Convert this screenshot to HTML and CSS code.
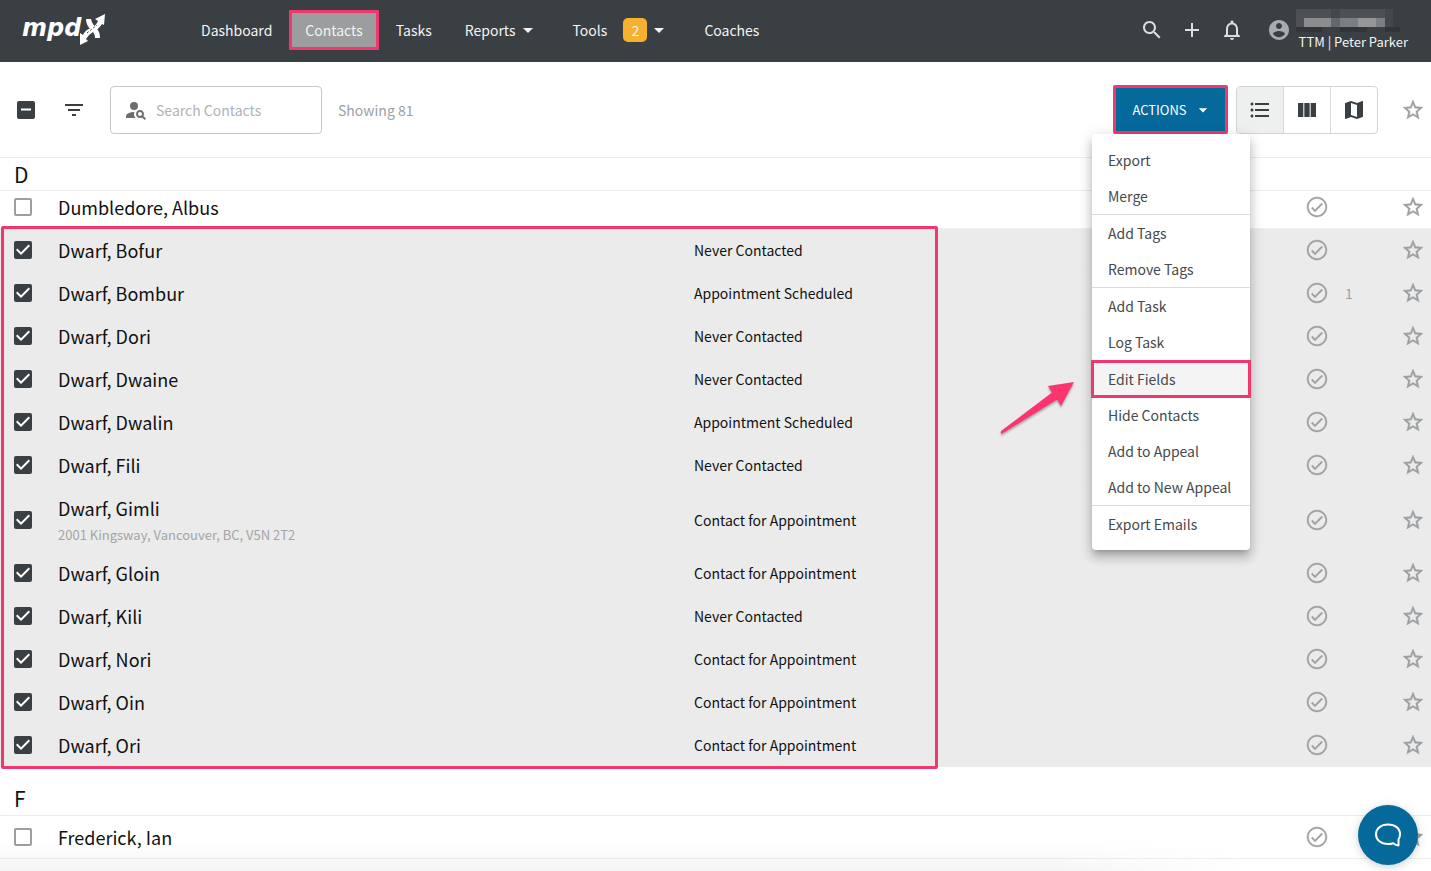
FILE: index.html
```html
<!DOCTYPE html>
<html lang="en">
<head>
<meta charset="utf-8">
<title>Contacts | MPDX</title>
<meta name="viewport" content="width=device-width, initial-scale=1">
<link rel="stylesheet" href="styles.css">
</head>
<body>
<svg width="0" height="0" class="sprite" aria-hidden="true">
  <symbol id="i-star" viewBox="0 0 24 24"><path d="M22 9.24l-7.19-.62L12 2 9.19 8.63 2 9.24l5.46 4.73L5.82 21 12 17.27 18.18 21l-1.63-7.03L22 9.24zM12 15.4l-3.76 2.27 1-4.28-3.32-2.88 4.38-.38L12 6.1l1.71 4.04 4.38.38-3.32 2.88 1 4.28L12 15.4z"/></symbol>
  <symbol id="i-done" viewBox="0 0 24 24"><path d="M12 2C6.48 2 2 6.48 2 12s4.48 10 10 10 10-4.48 10-10S17.52 2 12 2zm0 18.500c-4.690 0-8.500-3.810-8.500-8.500S7.310 3.500 12 3.500s8.500 3.810 8.500 8.500-3.810 8.500-8.500 8.500zm4.590-12.420L10 14.670l-2.590-2.580L6.300 13.200 10 16.900l7.700-7.700z"/></symbol>
  <symbol id="i-down" viewBox="0 0 24 24"><path d="M7 10l5 5 5-5z"/></symbol>
</svg>

<header class="topbar">
  <a class="logo" href="#" aria-label="mpdx">
    <svg width="90" height="40" viewBox="0 0 90 40" aria-hidden="true">
      <text class="logo-text" x="0" y="26">mpd</text>
      <path d="M83 4L82 15L80 14Q77 19 71 22Q66 25 64 29L66 31L58 35L58 23L61 25Q63 20 69 18Q74 16 76 11L73 9Z"/>
      <path d="M64 9L69 9Q70 14 75 19Q78 22 78 28L73 28Q73 23 69 20Q64 15 64 9Z"/>
      <path class="logo-gap" d="M65 23L75 15"/>
    </svg>
  </a>
  <nav class="nav">
    <a href="#">Dashboard</a>
    <a href="#" class="current" aria-current="page">Contacts</a>
    <a href="#">Tasks</a>
    <a href="#">Reports<svg class="icon"><use href="#i-down"/></svg></a>
    <a href="#">Tools<span class="badge">2</span><svg class="icon"><use href="#i-down"/></svg></a>
    <a href="#">Coaches</a>
  </nav>
  <div class="tools">
    <button type="button" aria-label="Search"><svg class="icon" viewBox="0 0 24 24"><path d="M15.5 14h-.79l-.28-.27C15.410 12.590 16 11.110 16 9.500 16 5.910 13.090 3 9.500 3S3 5.910 3 9.500 5.910 16 9.500 16c1.610 0 3.090-.59 4.230-1.570l.27.28v.79l5 4.990L20.490 19l-4.990-5zm-6 0C7.010 14 5 11.990 5 9.500S7.010 5 9.500 5 14 7.010 14 9.500 11.990 14 9.500 14z"/></svg></button>
    <button type="button" aria-label="Add"><svg class="icon" viewBox="0 0 24 24"><path d="M19 13h-6v6h-2v-6H5v-2h6V5h2v6h6v2z"/></svg></button>
    <button type="button" aria-label="Notifications"><svg class="icon" viewBox="0 0 24 24"><path d="M12 22c1.100 0 2-.9 2-2h-4c0 1.100.9 2 2 2zm6-6v-5c0-3.070-1.630-5.640-4.500-6.320V4c0-.83-.67-1.500-1.500-1.500s-1.500.67-1.500 1.500v.68C7.640 5.360 6 7.920 6 11v5l-2 2v1h16v-1l-2-2zm-2 1H8v-6c0-2.480 1.510-4.500 4-4.500s4 2.020 4 4.500v6z"/></svg></button>
  </div>
  <button type="button" class="account">
    <svg class="icon" viewBox="0 0 24 24"><path d="M12 2C6.480 2 2 6.480 2 12s4.480 10 10 10 10-4.480 10-10S17.520 2 12 2zm0 3c1.660 0 3 1.340 3 3s-1.340 3-3 3-3-1.340-3-3 1.340-3 3-3zm0 14.200c-2.500 0-4.710-1.280-6-3.220.03-1.990 4-3.080 6-3.080 1.990 0 5.970 1.090 6 3.080-1.290 1.940-3.500 3.220-6 3.220z"/></svg>
    <span class="account-text">
      <svg class="mosaic" width="106" height="23" aria-hidden="true">
        <path fill="#4d5154" d="M0 0h35v18H0zM44 0h45v18H44z"/><path fill="#44484b" d="M35 0h9v18h-9zM89 0h8v18h-8z"/>
        <path fill="#8a8c8e" d="M8 9h27v9H8z"/><path fill="#7c7f81" d="M44 9h45v9H44z"/><path fill="#949698" d="M62 9h18v9H62z"/>
        <path fill="#65686b" d="M35 9h9v9h-9z"/><path fill="#313539" d="M0 18h26v5H0zM44 18h27v5H44zM89 18h15v5H89z"/>
      </svg>
      <span>TTM | Peter Parker</span>
    </span>
  </button>
</header>

<main>
<div class="toolbar">
  <input type="checkbox" class="box mixed" aria-label="Select all contacts">
  <button type="button" class="filter" aria-label="Filter"><svg class="icon" viewBox="0 0 24 24"><path d="M10 18h4v-2h-4v2zM3 6v2h18V6H3zm3 7h12v-2H6v2z"/></svg></button>
  <label class="search">
    <svg class="icon" viewBox="0 0 24 24"><circle cx="10" cy="8" r="4"/><path d="M10.350 14.010C7.620 13.910 2 15.270 2 18v2h9.540c-2.470-2.760-1.230-5.890-1.190-5.990zM19.430 18.020c.36-.59.57-1.280.57-2.020 0-2.210-1.790-4-4-4s-4 1.790-4 4 1.790 4 4 4c.74 0 1.430-.22 2.020-.57L20.590 22 22 20.590l-2.570-2.570zM16 18c-1.100 0-2-.9-2-2s.9-2 2-2 2 .9 2 2-.9 2-2 2z"/></svg>
    <input type="text" placeholder="Search Contacts" aria-label="Search Contacts">
  </label>
  <span class="showing">Showing 81</span>
  <div class="actions">
    <button type="button" class="actions-btn" aria-haspopup="menu" aria-expanded="true">ACTIONS<svg class="icon"><use href="#i-down"/></svg></button>
    <div class="menu" role="menu">
      <button type="button" role="menuitem">Export</button>
      <button type="button" role="menuitem">Merge</button>
      <hr>
      <button type="button" role="menuitem">Add Tags</button>
      <button type="button" role="menuitem">Remove Tags</button>
      <hr>
      <button type="button" role="menuitem">Add Task</button>
      <button type="button" role="menuitem">Log Task</button>
      <hr>
      <button type="button" role="menuitem" class="hot">Edit Fields</button>
      <button type="button" role="menuitem">Hide Contacts</button>
      <button type="button" role="menuitem">Add to Appeal</button>
      <button type="button" role="menuitem">Add to New Appeal</button>
      <hr>
      <button type="button" role="menuitem">Export Emails</button>
      <svg class="arrow" width="80" height="60" viewBox="0 0 80 60" aria-hidden="true"><path d="M76 6L63 30L59 23.500L5 57Q2 59 3 55L54 16.500L50 10Z"/></svg>
    </div>
  </div>
  <div class="views">
    <button type="button" class="on" aria-label="List view"><svg class="icon" viewBox="0 0 24 24"><path d="M4 10.500c-.83 0-1.500.67-1.500 1.500s.67 1.500 1.500 1.500 1.500-.67 1.500-1.500-.67-1.500-1.500-1.500zm0-6c-.83 0-1.500.67-1.500 1.500S3.170 7.500 4 7.500 5.500 6.830 5.500 6 4.830 4.500 4 4.500zm0 12c-.83 0-1.500.68-1.500 1.500s.68 1.500 1.500 1.500 1.500-.68 1.500-1.500-.67-1.500-1.500-1.500zM7 19h14v-2H7v2zm0-6h14v-2H7v2zm0-8v2h14V5H7z"/></svg></button>
    <button type="button" aria-label="Column view"><svg class="icon" viewBox="0 0 24 24"><path d="M3 5h5.330v14H3zM9.330 5h5.330v14H9.330zM15.660 5H21v14h-5.340z"/></svg></button>
    <button type="button" aria-label="Map view"><svg class="icon" viewBox="0 0 24 24"><path d="M20.500 3l-.16.03L15 5.100 9 3 3.360 4.900c-.21.07-.36.25-.36.48V20.500c0 .28.22.5.5.5l.16-.03L9 18.900l6 2.100 5.640-1.900c.21-.07.36-.25.36-.48V3.500c0-.28-.22-.5-.5-.5zM15 19l-6-2.110V5l6 2.110V19z"/></svg></button>
  </div>
  <button type="button" class="star" aria-label="Starred only"><svg class="icon"><use href="#i-star"/></svg></button>
</div>

<section>
  <h2 class="letter stuck">D</h2>
  <ul class="rows" data-rows="plain-d"></ul>
  <div class="picked">
    <ul class="rows" data-rows="dwarves"></ul>
    <div class="frame"></div>
  </div>
</section>
<section>
  <h2 class="letter">F</h2>
  <ul class="rows" data-rows="plain-f"></ul>
</section>
</main>

<div class="shade"></div>
<button type="button" class="chat" aria-label="Open chat"><svg width="28" height="28" viewBox="0 0 28 28"><path d="M24.500 24.500V18.500C25.500 17 26 15 26 13.200C26 7.200 21 3.500 14 3.500S2 7.500 2 13.200S7 23 14 23C16 23 17.800 22.800 19.300 22.200Q21.500 24.200 24.500 24.500Z"/></svg></button>
<script src="app.js"></script>
</body>
</html>
```
FILE: styles.css
```css
* { box-sizing: border-box; }

:root {
  --dark: #3a3f43;
  --blue: #05699b;
  --pink: #f0386f;
  --grey: #9c9fa1;
}

body {
  margin: 0;
  min-height: 100vh;
  overflow: hidden;
  background: #fff;
  color: #111;
  font: 14px/20px "Noto Sans CJK SC", "Noto Sans", sans-serif;
}

button, input { font: inherit; color: inherit; }
button { padding: 0; border: 0; background: none; display: inline-flex; align-items: center; justify-content: center; cursor: pointer; }
a { color: inherit; text-decoration: none; }
.sprite { position: absolute; }
.icon { width: 24px; height: 24px; fill: currentColor; flex: none; }

/* Top bar */
.topbar { display: flex; align-items: center; height: 62px; padding: 0 23px 2px 22px; background: var(--dark); color: #f4f4f4; }
.logo { width: 163px; height: 40px; }
.logo svg { fill: #fff; overflow: visible; }
.logo-text { font: italic bold 24px "DejaVu Sans", sans-serif; }
.logo-gap { stroke: var(--dark); stroke-width: 1; stroke-dasharray: 2 2; fill: none; }
.nav { display: flex; align-items: center; gap: 1px; }
.nav a { display: flex; align-items: center; height: 40px; padding: 0 16px; }
.nav .current { background: #9b9d9f; outline: 3px solid var(--pink); outline-offset: -3px; border-radius: 2px; }
.badge { margin-left: 16px; width: 24px; height: 24px; border-radius: 5px; background: #f8b12f; line-height: 24px; text-align: center; }
.tools { display: flex; margin-left: auto; color: #dcddde; }
.tools button { width: 40px; height: 40px; }
.account { margin-left: 15px; gap: 8px; color: #f4f4f4; }
.account > .icon { fill: #a9abad; }
.account-text { display: flex; flex-direction: column; align-items: flex-start; font-size: 13px; line-height: 20px; }
.mosaic { margin-left: -3px; }

/* Toolbar */
.toolbar { display: flex; align-items: center; height: 96px; padding: 0 6px 0 17px; border-bottom: 1px solid #ececec; }
.filter { width: 24px; height: 24px; margin: 0 24px 0 27px; color: var(--dark); }
.search { display: flex; align-items: center; gap: 8px; width: 212px; height: 48px; padding: 0 8px 0 13px; border: 1px solid #c6c7c8; border-radius: 4px; color: #6b6e70; }
.search input { flex: 1; min-width: 0; border: 0; padding: 0; outline: 0; background: none; color: #111; }
.search input::placeholder { color: #b0b2b3; opacity: 1; }
.showing { margin-left: 16px; color: var(--grey); }
.actions { position: relative; margin-left: auto; }
.actions-btn { width: 115px; height: 49px; padding-left: 4px; gap: 6px; border: 3px solid var(--pink); border-radius: 2px; background: var(--blue); color: #fff; font-size: 13px; }
.actions-btn .icon { width: 20px; height: 20px; }
.views { display: flex; margin: 0 23px 0 8px; border: 1px solid #d3d5d5; border-radius: 4px; color: var(--dark); overflow: hidden; }
.views button { width: 47px; height: 46px; }
.views button + button { border-left: 1px solid #d9dbdb; }
.views .on { width: 46px; background: #eef0f0; }
.star { color: var(--grey); }

/* Actions menu */
.menu { position: absolute; z-index: 3; top: 49px; left: -21px; width: 158px; padding: 8px 0; border-radius: 4px; background: #fff; color: #45494c; box-shadow: 0 5px 5px -3px rgba(0,0,0,.2), 0 8px 10px 1px rgba(0,0,0,.14), 0 3px 14px 2px rgba(0,0,0,.12); }
.menu button { width: 100%; height: 36px; padding: 0 16px; justify-content: flex-start; white-space: nowrap; }
.menu hr { margin: 0; border: 0; border-top: 1px solid #dcdcdc; }
.menu .hot { background: #f4f4f4; outline: 3px solid var(--pink); outline-offset: -2px; }
.arrow { position: absolute; right: 100%; top: 242px; margin-right: 14px; fill: #fd3470; filter: drop-shadow(0 2px 1px rgba(0,0,0,.3)); }

/* Contact list */
.letter { display: flex; align-items: center; height: 49px; margin: 0; padding: 14px 14px 0; border-bottom: 1px solid #ececec; background: #fff; font-size: 21px; font-weight: 400; line-height: 28px; }
.letter.stuck { position: relative; z-index: 1; height: 33px; margin-bottom: -5px; padding-top: 0; }
.rows { margin: 0; padding: 0; list-style: none; }
.row { display: grid; grid-template-columns: 44px minmax(0, 636fr) minmax(0, 611fr) 24px 72px 24px; align-items: center; min-height: 43px; padding: 0 6px 0 14px; border-bottom: 1px solid #f0f0f0; }
.row.sel { background: #ebebeb; border-color: #e9e9e9; }
.name { font-size: 18px; line-height: 26px; }
.place { display: block; font-size: 13px; line-height: 20px; color: #a3a5a6; padding-top: 4px; }
.two { padding-top: 8px; padding-bottom: 6px; }
.row .icon, .star .icon { stroke: currentColor; stroke-width: 0.4; }
.row > .icon, .count { color: var(--grey); }
.count { padding-left: 16px; }
.picked { position: relative; }
.frame { position: absolute; z-index: 2; top: -3px; bottom: -2px; left: 1px; right: 493px; border: 3px solid var(--pink); border-radius: 2px; pointer-events: none; }

/* Checkboxes */
.box { appearance: none; flex: none; width: 18px; height: 18px; margin: 0; border: 2px solid #9c9fa1; border-radius: 2px; background: #fff; }
.box:checked, .box.mixed { border: 0; background: var(--dark); }
.box:checked::before, .box.mixed::before { content: ""; display: block; width: 18px; height: 18px; background: #fff; }
.box:checked::before { clip-path: polygon(7px 14px, 2px 9px, 3.41px 7.59px, 7px 11.17px, 14.59px 3.58px, 16px 5px); }
.box.mixed::before { clip-path: polygon(4px 8px, 14px 8px, 14px 10px, 4px 10px); }

/* Floating parts */
.shade { position: fixed; left: 0; right: 180px; bottom: 0; height: 30px; background: linear-gradient(to bottom, rgba(0,0,0,0), rgba(0,0,0,.04)); mask-image: linear-gradient(to left, transparent, #000 200px); pointer-events: none; }
.chat { position: fixed; z-index: 4; right: 13px; bottom: 6px; width: 60px; height: 60px; border-radius: 50%; background: var(--blue); box-shadow: 0 1px 6px rgba(0,0,0,.1), 0 2px 12px rgba(0,0,0,.12); }
.chat path { fill: none; stroke: #fff; stroke-width: 2; stroke-linejoin: round; }
```
FILE: app.js
```js
const lists = {
  'plain-d': [{ name: 'Dumbledore, Albus' }],
  dwarves: [
    ['Bofur', 'Never Contacted'],
    ['Bombur', 'Appointment Scheduled', '1'],
    ['Dori', 'Never Contacted'],
    ['Dwaine', 'Never Contacted'],
    ['Dwalin', 'Appointment Scheduled'],
    ['Fili', 'Never Contacted'],
    ['Gimli', 'Contact for Appointment', '', '2001 Kingsway, Vancouver, BC, V5N 2T2'],
    ['Gloin', 'Contact for Appointment'],
    ['Kili', 'Never Contacted'],
    ['Nori', 'Contact for Appointment'],
    ['Oin', 'Contact for Appointment'],
    ['Ori', 'Contact for Appointment'],
  ].map(([first, status, count, place]) => ({ name: `Dwarf, ${first}`, status, count, place, selected: true })),
  'plain-f': [{ name: 'Frederick, Ian' }],
};

const row = ({ name, status = '', count = '', place = '', selected }) => `
  <li class="row${selected ? ' sel' : ''}${place ? ' two' : ''}">
    <input type="checkbox" class="box" aria-label="Select ${name}"${selected ? ' checked' : ''}>
    <div><a href="#" class="name">${name}</a>${place && `<span class="place">${place}</span>`}</div>
    <span>${status}</span>
    <svg class="icon"><use href="#i-done"/></svg>
    <span class="count">${count}</span>
    <button type="button" class="star" aria-label="Star ${name}"><svg class="icon"><use href="#i-star"/></svg></button>
  </li>`;

document.querySelectorAll('[data-rows]').forEach((list) => {
  list.innerHTML = lists[list.dataset.rows].map(row).join('');
});
document.querySelector('.mixed').indeterminate = true;
```
